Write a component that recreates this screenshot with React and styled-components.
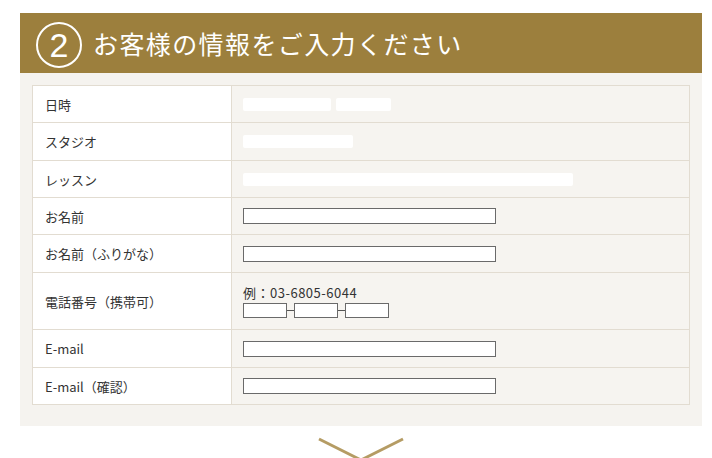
import styled, { createGlobalStyle } from "styled-components";

const GlobalStyle = createGlobalStyle`
  body {
    margin: 0;
    background: #ffffff;
    font-family: "Noto Sans CJK JP", "Noto Sans", sans-serif;
    color: #333333;
  }
`

const rows = [
  { label: "日時", h: 36, kind: "text", blocks: [88, 55] },
  { label: "スタジオ", h: 37, kind: "text", blocks: [110] },
  { label: "レッスン", h: 36, kind: "text", blocks: [330] },
  { label: "お名前", h: 36, kind: "input" },
  { label: "お名前（ふりがな）", h: 37, kind: "input" },
  { label: "電話番号（携帯可）", h: 56, kind: "tel" },
  { label: "E-mail", h: 37, kind: "input" },
  { label: "E-mail（確認）", h: 36, kind: "input" },
]

export default function App(){
    return(
        <>
            <GlobalStyle />
            <Page>
                <Panel>
                    <Header>
                        <Circle>2</Circle>
                        <Title>お客様の情報をご入力ください</Title>
                    </Header>
                    <Table>
                        {rows.map((r) => (
                            <Row key={r.label} $h={r.h}>
                                <Label>{r.label}</Label>
                                <Value>
                                    {r.kind === "text" && (
                                        <Blocks>
                                            {r.blocks.map((w, i) => <Block key={i} $w={w} />)}
                                        </Blocks>
                                    )}
                                    {r.kind === "input" && <Input type="text" />}
                                    {r.kind === "tel" && (
                                        <Tel>
                                            <Example>例：03-6805-6044</Example>
                                            <TelInputs>
                                                <SmallInput type="text" />
                                                <Dash />
                                                <SmallInput type="text" />
                                                <Dash />
                                                <SmallInput type="text" />
                                            </TelInputs>
                                        </Tel>
                                    )}
                                </Value>
                            </Row>
                        ))}
                    </Table>
                </Panel>
                <Arrow>
                    <svg width="90" height="24" viewBox="0 0 90 24">
                        <path d="M3 2 L45 23 L87 2" fill="none" stroke="#b59c64" strokeWidth="3" />
                    </svg>
                </Arrow>
            </Page>
        </>
    )
}

const Page = styled.div`
    width: 682px;
    padding: 13px 0 0 20px;
`
const Panel = styled.section`
    background: #f5f3ef;
    padding-bottom: 21px;
`
const Header = styled.header`
    height: 60px;
    background: #9c7f3d;
    display: flex;
    align-items: center;
    padding-left: 16px;
    margin-bottom: 12px;
`
const Circle = styled.div`
    width: 42px;
    height: 42px;
    border: 2px solid #ffffff;
    border-radius: 50%;
    color: #ffffff;
    font-family: "Liberation Sans", sans-serif;
    font-weight: 400;
    font-size: 34px;
    line-height: 42px;
    text-align: center;
    margin-top: 4px;
`
const Title = styled.h2`
    margin: 0 0 0 11px;
    color: #ffffff;
    font-size: 25px;
    font-weight: 400;
    letter-spacing: 1.4px;
`
const Table = styled.div`
    margin: 0 12px;
    border: 1px solid #e2dcd1;
    border-bottom: none;
`
const Row = styled.div`
    display: flex;
    height: ${(p) => p.$h}px;
    border-bottom: 1px solid #e2dcd1;
`
const Label = styled.div`
    width: 186px;
    padding-left: 12px;
    background: #ffffff;
    border-right: 1px solid #e2dcd1;
    display: flex;
    align-items: center;
    font-size: 13px;
    color: #333333;
`
const Value = styled.div`
    flex: 1;
    padding-left: 11px;
    background: #f6f4f0;
    display: flex;
    align-items: center;
`
const Blocks = styled.div`
    display: flex;
    gap: 5px;
`
const Block = styled.span`
    width: ${(p) => p.$w}px;
    height: 13px;
    background: #ffffff;
    border-radius: 2px;
`
const Input = styled.input`
    width: 253px;
    height: 16px;
    box-sizing: border-box;
    border: 1px solid #6a6a6a;
    background: #ffffff;
    padding: 0;
    margin: 0;
`
const Tel = styled.div`
    display: flex;
    flex-direction: column;
    gap: 3px;
    margin-top: 2px;
`
const Example = styled.span`
    font-size: 13px;
    line-height: 14px;
    letter-spacing: 0.5px;
    color: #333333;
`
const TelInputs = styled.div`
    display: flex;
    align-items: center;
`
const SmallInput = styled(Input)`
    width: 44px;
    height: 15px;
`
const Dash = styled.span`
    width: 7px;
    height: 1px;
    background: #555555;
`
const Arrow = styled.div`
    display: flex;
    justify-content: center;
    margin-top: 11px;
`
